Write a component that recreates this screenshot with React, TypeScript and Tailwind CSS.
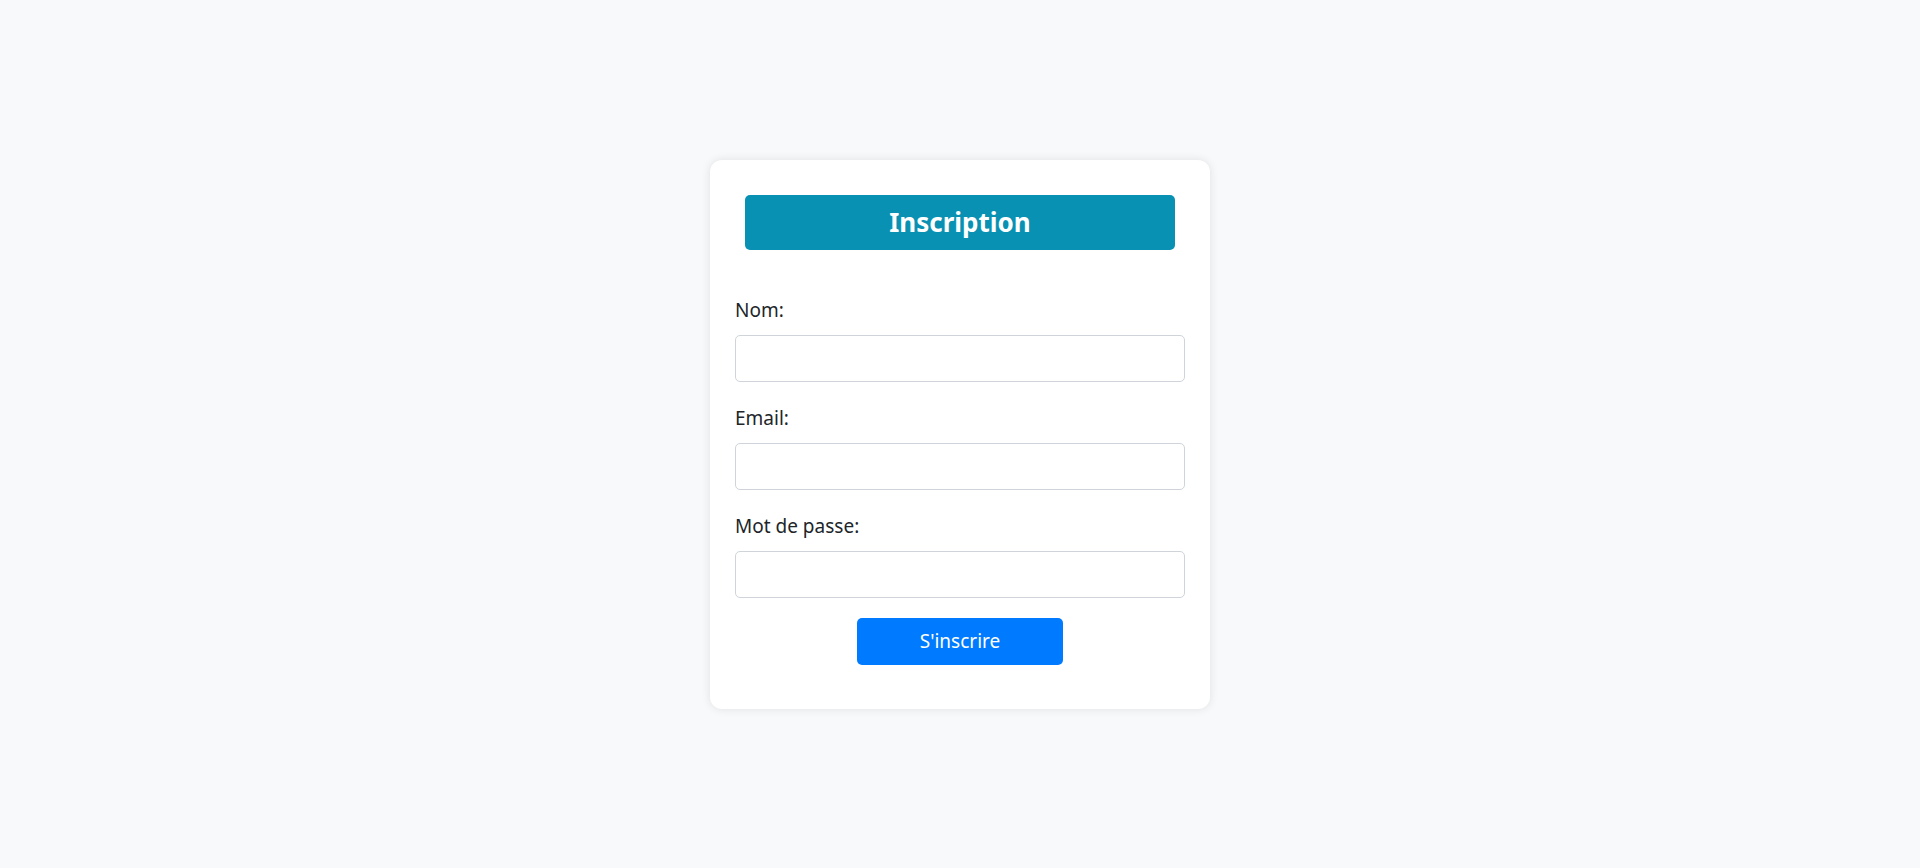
export default function App() {
  return (
    <div className="min-h-[868px] bg-[#f8f9fa] pt-[160px] font-['Noto_Sans',sans-serif] text-[#212529]">
      <div className="mx-auto w-[500px] rounded-xl bg-white px-[25px] pt-[25px] pb-[44px] shadow-[0_0_10px_rgba(0,0,0,0.1)]">
        <h2 className="mx-[10px] mt-[10px] flex h-[55px] items-center justify-center rounded-[5px] bg-[#0891b2] text-[26px] font-bold text-white">
          Inscription
        </h2>
        <form className="mt-[48px]" onSubmit={(e) => e.preventDefault()}>
          <Field label="Nom:" type="text" />
          <Field label="Email:" type="email" />
          <Field label="Mot de passe:" type="password" last />
          <div className="mt-[20px] flex justify-center">
            <button
              type="submit"
              className="h-[47px] w-[206px] rounded-[5px] bg-[#007bff] text-[19px] text-white"
            >
              S'inscrire
            </button>
          </div>
        </form>
      </div>
    </div>
  );
}

function Field({ label, type, last }: { label: string; type: string; last?: boolean }) {
  return (
    <div className={last ? "" : "mb-[24px]"}>
      <label className="block text-[19px] leading-[25px]">{label}</label>
      <input
        type={type}
        className="mt-[12px] block h-[47px] w-full rounded-[5px] border border-[#ced4da] bg-white px-3 outline-none"
      />
    </div>
  );
}
